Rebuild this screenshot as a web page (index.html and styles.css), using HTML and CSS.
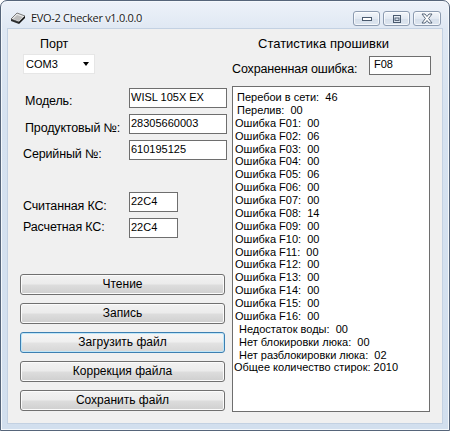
FILE: index.html
```html
<!DOCTYPE html>
<html>
<head>
<meta charset="utf-8">
<link rel="stylesheet" href="styles.css">
</head>
<body>
<div class="window">
  <div class="titlebar">
    <svg class="app-icon" width="16" height="12" viewBox="0 0 16 12">
      <polygon points="1,7 7,1 15,4 9,10" fill="#e9e9e9" stroke="#5a5a5a" stroke-width="0.8"/>
      <polygon points="1,7 9,10 9,12 1,9" fill="#2d2d2d"/>
      <polygon points="9,10 15,4 15,6 9,12" fill="#111"/>
      <polygon points="3,7 7,3 13,5 9,9" fill="#bdbdbd"/>
    </svg>
    <span class="title">EVO-2 Checker v1.0.0.0</span>
    <div class="caption-buttons">
      <div class="cbtn">
        <svg width="12" height="6" viewBox="0 0 12 6"><rect x="1.5" y="1.5" width="9" height="3" fill="#fff" stroke="#4a5a6e"/></svg>
      </div>
      <div class="cbtn">
        <svg width="12" height="10" viewBox="0 0 12 10"><rect x="2.5" y="1.5" width="7" height="7" fill="none" stroke="#4a5a6e"/><rect x="4" y="4" width="4" height="2.5" fill="none" stroke="#4a5a6e" stroke-width="0.9"/></svg>
      </div>
      <div class="cbtn close">
        <svg width="14" height="11" viewBox="0 0 14 11"><path d="M2,1 L5,1 L7,3.5 L9,1 L12,1 L8.6,5.5 L12,10 L9,10 L7,7.5 L5,10 L2,10 L5.4,5.5 Z" fill="#fff" stroke="#4a5a6e" stroke-width="0.9" stroke-linejoin="round"/></svg>
      </div>
    </div>
  </div>
  <div class="frame">
    <div class="client">
      <div class="left">
        <div class="port">
          <div class="port-label">Порт</div>
          <div class="combo"><span>COM3</span><span class="arrow"></span></div>
        </div>
        <div class="fields">
          <div class="row r1"><span class="lbl ind">Модель:</span><div class="tb wide">WISL 105X EX</div></div>
          <div class="row r2"><span class="lbl ind">Продуктовый №:</span><div class="tb wide">28305660003</div></div>
          <div class="row r3"><span class="lbl">Серийный №:</span><div class="tb wide">610195125</div></div>
          <div class="row r4"><span class="lbl">Считанная КС:</span><div class="tb short">22C4</div></div>
          <div class="row r5"><span class="lbl">Расчетная КС:</span><div class="tb short">22C4</div></div>
        </div>
        <div class="buttons">
          <div class="btn">Чтение</div>
          <div class="btn">Запись</div>
          <div class="btn focused">Загрузить файл</div>
          <div class="btn">Коррекция файла</div>
          <div class="btn">Сохранить файл</div>
        </div>
      </div>
      <div class="right">
        <div class="stat-title">Статистика прошивки</div>
        <div class="saved">
          <span class="lbl">Сохраненная ошибка:</span>
          <div class="tb err">F08</div>
        </div>
        <div class="listbox">
          <div class="it p4">Перебои в сети:  46</div>
          <div class="it p4">Перелив:  00</div>
          <div class="it p2">Ошибка F01:  00</div>
          <div class="it p2">Ошибка F02:  06</div>
          <div class="it p2">Ошибка F03:  00</div>
          <div class="it p2">Ошибка F04:  00</div>
          <div class="it p2">Ошибка F05:  06</div>
          <div class="it p2">Ошибка F06:  00</div>
          <div class="it p2">Ошибка F07:  00</div>
          <div class="it p2">Ошибка F08:  14</div>
          <div class="it p2">Ошибка F09:  00</div>
          <div class="it p2">Ошибка F10:  00</div>
          <div class="it p2">Ошибка F11:  00</div>
          <div class="it p2">Ошибка F12:  00</div>
          <div class="it p2">Ошибка F13:  00</div>
          <div class="it p2">Ошибка F14:  00</div>
          <div class="it p2">Ошибка F15:  00</div>
          <div class="it p2">Ошибка F16:  00</div>
          <div class="it p6">Недостаток воды:  00</div>
          <div class="it p6">Нет блокировки люка:  00</div>
          <div class="it p6">Нет разблокировки люка:  02</div>
          <div class="it p1">Общее количество стирок: 2010</div>
        </div>
      </div>
    </div>
  </div>
</div>
</body>
</html>
```

FILE: styles.css
```css
html, body {
  margin: 0;
  padding: 0;
  background: #ffffff;
}
body {
  width: 450px;
  height: 431px;
  overflow: hidden;
  font-family: "Liberation Sans", Arial, sans-serif;
  color: #000;
}
.window {
  width: 450px;
  height: 431px;
  box-sizing: border-box;
  border: 1px solid #56657a;
  border-radius: 7px 7px 0 0;
  background: linear-gradient(#edf2f9 0px, #dfe8f3 28px, #d6e2f0 120px, #d2dfee 100%);
  display: flex;
  flex-direction: column;
  box-shadow: inset 0 0 0 1px #f4f8fc;
}
.titlebar {
  height: 28px;
  display: flex;
  align-items: flex-start;
  padding-left: 9px;
  flex-shrink: 0;
}
.app-icon {
  margin-top: 11px;
}
.title {
  margin-left: 5px;
  margin-top: 9px;
  font-family: "Open Sans", "DejaVu Sans", sans-serif;
  font-size: 11px;
  letter-spacing: -0.3px;
  line-height: 15px;
  color: #1a1a1a;
  text-shadow: 0 0 6px #ffffff, 0 0 3px #ffffff;
}
.caption-buttons {
  margin-left: auto;
  margin-right: 8px;
  margin-top: 10px;
  display: flex;
  gap: 3px;
}
.cbtn {
  width: 25px;
  height: 13px;
  border: 1px solid #8c9bb0;
  border-radius: 3px;
  background: linear-gradient(#f3f6fa, #e2e9f2 50%, #d5deea 51%, #dde6f0);
  box-shadow: inset 0 0 0 1px rgba(255,255,255,0.7);
  display: flex;
  align-items: center;
  justify-content: center;
}
.cbtn.close {
  width: 26px;
}
.frame {
  flex: 1;
  padding: 0 7px 7px 7px;
  display: flex;
}
.client {
  flex: 1;
  background: #f0f0f0;
  display: flex;
  box-shadow: 0 0 0 1px #c3d1e2;
}
.left {
  width: 222px;
  padding-top: 8px;
  flex-shrink: 0;
}
.port {
  padding-left: 15px;
}
.port-label {
  padding-left: 17px;
  font-size: 12.5px;
  line-height: 15px;
}
.combo {
  margin-top: 2px;
  width: 72px;
  height: 20px;
  box-sizing: border-box;
  background: #fff;
  border: 1px solid #e6e6e6;
  display: flex;
  align-items: center;
  padding-left: 2px;
  font-size: 11px;
}
.combo .arrow {
  margin-left: auto;
  margin-right: 5px;
  width: 0;
  height: 0;
  border-left: 3.5px solid transparent;
  border-right: 3.5px solid transparent;
  border-top: 4px solid #000;
}
.fields {
  padding-left: 15px;
}
.row {
  height: 20px;
  display: flex;
  align-items: flex-start;
}
.r1 { margin-top: 14px; }
.r2 { margin-top: 6px; }
.r3 { margin-top: 6px; }
.r4 { margin-top: 32px; }
.r5 { margin-top: 6px; }
.lbl {
  font-size: 12.5px;
  line-height: 15px;
  letter-spacing: -0.15px;
  width: 106px;
  box-sizing: border-box;
  white-space: nowrap;
}
.lbl.ind {
  padding-left: 2px;
}
.r1 .lbl { margin-top: 6px; }
.r2 .lbl { margin-top: 7px; }
.r3 .lbl { margin-top: 7px; }
.r4 .lbl { margin-top: 7px; }
.r5 .lbl { margin-top: 2px; }
.tb {
  height: 20px;
  box-sizing: border-box;
  border: 1px solid #6e6e6e;
  background: #fff;
  font-size: 11px;
  line-height: 16px;
  padding-left: 1px;
  white-space: nowrap;
  overflow: hidden;
}
.tb.wide { width: 98px; }
.tb.short { width: 49px; }
.buttons {
  margin-top: 36px;
  padding-left: 12px;
  display: flex;
  flex-direction: column;
  gap: 8px;
}
.btn {
  width: 205px;
  height: 21px;
  box-sizing: border-box;
  border: 1px solid #707070;
  border-radius: 3px;
  background: linear-gradient(#f2f2f2 0%, #ebebeb 48%, #dddddd 52%, #cfcfcf 100%);
  box-shadow: inset 0 0 0 1px #fbfbfb;
  font-size: 12px;
  line-height: 19px;
  text-align: center;
}
.btn.focused {
  border-color: #3c7fb1;
  box-shadow: inset 0 0 0 1px #bfe6f8;
  background: linear-gradient(#f6f6f6 0%, #efefef 48%, #e3e3e3 52%, #d6d6d6 100%);
}
.right {
  margin-left: 2px;
  padding-top: 7px;
  display: flex;
  flex-direction: column;
}
.stat-title {
  padding-left: 26px;
  font-size: 13px;
  line-height: 15px;
}
.saved {
  margin-top: 5px;
  height: 20px;
  display: flex;
  align-items: flex-start;
}
.saved .lbl {
  width: 137px;
  margin-top: 6px;
}
.tb.err {
  width: 62px;
  height: 19px;
  line-height: 15px;
  padding-left: 4px;
}
.listbox {
  margin-top: 10px;
  width: 198px;
  height: 326px;
  box-sizing: border-box;
  border: 1px solid #6e6e6e;
  background: #fff;
  padding-top: 4px;
  font-size: 11px;
}
.it {
  line-height: 12.87px;
  white-space: pre;
}
.p1 { padding-left: 1px; }
.p2 { padding-left: 2px; }
.p4 { padding-left: 4px; }
.p6 { padding-left: 6px; }
```
